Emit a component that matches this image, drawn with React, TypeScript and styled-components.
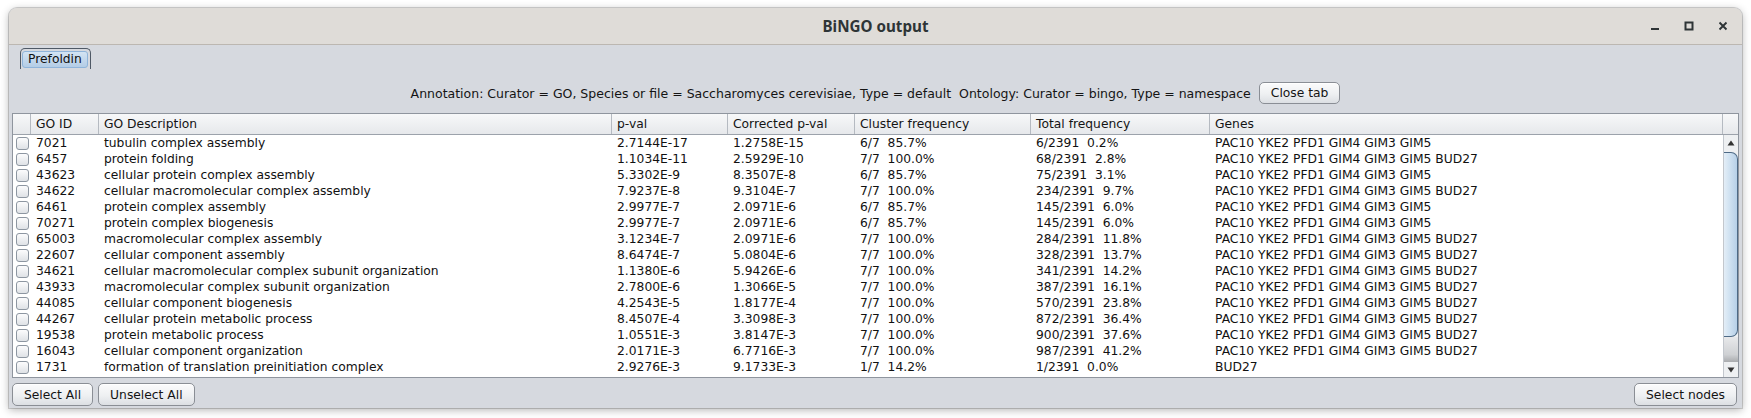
import React from 'react';
import styled, { createGlobalStyle } from 'styled-components';

const GlobalStyle = createGlobalStyle`
  html, body { margin: 0; padding: 0; background: #ffffff; }
  body {
    font-family: "DejaVu Sans", "Liberation Sans", sans-serif;
    font-size: 12.3px;
    color: #141414;
  }
  #root { width: 1751px; height: 418px; overflow: hidden; }
`;

const Page = styled.div`
  width: 1751px;
  height: 418px;
  box-sizing: border-box;
  padding: 8px 9px 10px 9px;
  display: flex;
`;

const Window = styled.div`
  flex: 1;
  display: flex;
  flex-direction: column;
  border-radius: 8px 8px 0 0;
  box-shadow: 0 0 0 1px rgba(0, 0, 0, 0.16), 0 2px 9px rgba(0, 0, 0, 0.3);
  overflow: hidden;
  background: #d6d9df;
`;

const TitleBar = styled.div`
  height: 36px;
  flex: none;
  display: grid;
  grid-template-columns: 1fr auto 1fr;
  align-items: center;
  background: #dfdcd8;
  border-bottom: 1px solid #bcb7b1;
`;

const Title = styled.div`
  grid-column: 2;
  font-family: "Noto Sans", "Open Sans", sans-serif;
  font-weight: 700;
  font-size: 15.2px;
  color: #2e3436;
`;

const Controls = styled.div`
  grid-column: 3;
  justify-self: end;
  display: flex;
  padding-right: 2px;
`;

const ControlButton = styled.div`
  width: 34px;
  height: 36px;
  display: flex;
  align-items: center;
  justify-content: center;
  color: #2e3436;
`;

const Body = styled.div`
  flex: 1;
  display: flex;
  flex-direction: column;
  padding: 0 3px 2px 3px;
  min-height: 0;
`;

const TabStrip = styled.div`
  display: flex;
  padding: 3px 0 0 8px;
  height: 21px;
`;

const Tab = styled.div`
  width: 71px;
  height: 21px;
  box-sizing: border-box;
  border: 1px solid #4f5966;
  border-bottom: none;
  border-radius: 5px 5px 0 0;
  padding: 2px 2px 1px 1px;
  background: #d6d9df;
`;

const TabInner = styled.div`
  height: 100%;
  box-sizing: border-box;
  border: 1px solid #8fb4da;
  border-radius: 3px;
  background: linear-gradient(#d3e3f3, #b4cde6);
  padding-left: 5px;
  line-height: 15px;
  color: #111;
  white-space: nowrap;
`;

const InfoRow = styled.div`
  margin-top: 13px;
  height: 22px;
  display: flex;
  align-items: center;
  justify-content: center;
  gap: 8px;
`;

const InfoText = styled.span`
  white-space: pre;
  font-size: 12.5px;
  color: #141414;
`;

const Button = styled.div<{ $h?: number }>`
  height: ${(p) => p.$h ?? 23}px;
  box-sizing: border-box;
  padding: 0 11px;
  display: flex;
  align-items: center;
  justify-content: center;
  border: 1px solid #8a8e95;
  border-radius: 5px;
  background: linear-gradient(#fbfbfc 0%, #eef0f2 55%, #dcdfe3 100%);
  box-shadow: inset 0 1px 0 #ffffff;
  color: #141414;
  white-space: nowrap;
`;

const TableFrame = styled.div`
  margin-top: 9px;
  height: 265px;
  box-sizing: border-box;
  border: 1px solid #8f959e;
  background: #ffffff;
  display: flex;
  flex-direction: column;
  overflow: hidden;
`;

const COLS = '18px 68px 513px 116px 127px 176px 179px 513px';

const HeaderRow = styled.div`
  display: grid;
  grid-template-columns: ${COLS} 15px;
  height: 21px;
  box-sizing: border-box;
  border-bottom: 1px solid #9ca2ab;
  background: linear-gradient(#f7f8f9, #e6e8eb);
  flex: none;
`;

const HeaderCell = styled.div<{ $last?: boolean }>`
  padding-left: 5px;
  line-height: 20px;
  border-right: ${(p) => (p.$last ? 'none' : '1px solid #b5bac1')};
  color: #141414;
  white-space: nowrap;
  overflow: hidden;
`;

const BodyArea = styled.div`
  flex: 1;
  display: flex;
  min-height: 0;
`;

const Viewport = styled.div`
  flex: 1;
  overflow: hidden;
`;

const Row = styled.div`
  display: grid;
  grid-template-columns: ${COLS};
  height: 16px;
  line-height: 16px;
`;

const Cell = styled.div`
  padding-left: 5px;
  white-space: pre;
  overflow: hidden;
  color: #111;
`;

const CheckCell = styled.div`
  display: flex;
  align-items: center;
  justify-content: center;
`;

const CheckBox = styled.div`
  width: 13px;
  height: 13px;
  box-sizing: border-box;
  border: 1px solid #8d96a1;
  border-radius: 3px;
  background: linear-gradient(#fcfcfd, #dfe2e6);
`;

const ScrollBar = styled.div`
  width: 15px;
  flex: none;
  display: flex;
  flex-direction: column;
  background: #eef0f2;
  border-left: 1px solid #c3c7cd;
  box-sizing: border-box;
`;

const ArrowButton = styled.div`
  height: 15px;
  flex: none;
  display: flex;
  align-items: center;
  justify-content: center;
  color: #333;
`;

const Track = styled.div`
  flex: 1;
  display: flex;
  flex-direction: column;
  min-height: 0;
`;

const Thumb = styled.div`
  margin-top: 2px;
  height: 185px;
  flex: none;
  box-sizing: border-box;
  border: 1px solid #4e6a86;
  border-left: none;
  border-radius: 0 7px 7px 0;
  background: linear-gradient(90deg, #e4eef7 0%, #cfe1f1 45%, #b7d0e8 100%);
`;

const TrackRest = styled.div`
  flex: 1;
  background: linear-gradient(#e8e9eb 0%, #cfd1d4 70%, #a9abae 100%);
`;

const ButtonRow = styled.div`
  margin-top: 5px;
  height: 23px;
  display: flex;
  gap: 5px;
`;

const Spacer = styled.div`
  flex: 1;
`;

const RightButton = styled(Button)`
  margin-right: 2px;
`;

type RowData = [string, string, string, string, string, string, string];

const G6 = 'PAC10 YKE2 PFD1 GIM4 GIM3 GIM5';
const G7 = 'PAC10 YKE2 PFD1 GIM4 GIM3 GIM5 BUD27';

const rows: RowData[] = [
  ['7021', 'tubulin complex assembly', '2.7144E-17', '1.2758E-15', '6/7  85.7%', '6/2391  0.2%', G6],
  ['6457', 'protein folding', '1.1034E-11', '2.5929E-10', '7/7  100.0%', '68/2391  2.8%', G7],
  ['43623', 'cellular protein complex assembly', '5.3302E-9', '8.3507E-8', '6/7  85.7%', '75/2391  3.1%', G6],
  ['34622', 'cellular macromolecular complex assembly', '7.9237E-8', '9.3104E-7', '7/7  100.0%', '234/2391  9.7%', G7],
  ['6461', 'protein complex assembly', '2.9977E-7', '2.0971E-6', '6/7  85.7%', '145/2391  6.0%', G6],
  ['70271', 'protein complex biogenesis', '2.9977E-7', '2.0971E-6', '6/7  85.7%', '145/2391  6.0%', G6],
  ['65003', 'macromolecular complex assembly', '3.1234E-7', '2.0971E-6', '7/7  100.0%', '284/2391  11.8%', G7],
  ['22607', 'cellular component assembly', '8.6474E-7', '5.0804E-6', '7/7  100.0%', '328/2391  13.7%', G7],
  ['34621', 'cellular macromolecular complex subunit organization', '1.1380E-6', '5.9426E-6', '7/7  100.0%', '341/2391  14.2%', G7],
  ['43933', 'macromolecular complex subunit organization', '2.7800E-6', '1.3066E-5', '7/7  100.0%', '387/2391  16.1%', G7],
  ['44085', 'cellular component biogenesis', '4.2543E-5', '1.8177E-4', '7/7  100.0%', '570/2391  23.8%', G7],
  ['44267', 'cellular protein metabolic process', '8.4507E-4', '3.3098E-3', '7/7  100.0%', '872/2391  36.4%', G7],
  ['19538', 'protein metabolic process', '1.0551E-3', '3.8147E-3', '7/7  100.0%', '900/2391  37.6%', G7],
  ['16043', 'cellular component organization', '2.0171E-3', '6.7716E-3', '7/7  100.0%', '987/2391  41.2%', G7],
  ['1731', 'formation of translation preinitiation complex', '2.9276E-3', '9.1733E-3', '1/7  14.2%', '1/2391  0.0%', 'BUD27'],
];

const headers = ['GO ID', 'GO Description', 'p-val', 'Corrected p-val', 'Cluster frequency', 'Total frequency', 'Genes'];

const MinimizeIcon = () => (
  <svg width="10" height="10" viewBox="0 0 10 10">
    <rect x="1" y="7" width="8" height="2" fill="currentColor" />
  </svg>
);

const MaximizeIcon = () => (
  <svg width="10" height="10" viewBox="0 0 10 10">
    <rect x="1.5" y="1.5" width="7" height="7" fill="none" stroke="currentColor" strokeWidth="2" />
  </svg>
);

const CloseIcon = () => (
  <svg width="10" height="10" viewBox="0 0 10 10">
    <path d="M1.5 1.5 L8.5 8.5 M8.5 1.5 L1.5 8.5" stroke="currentColor" strokeWidth="1.9" />
  </svg>
);

const UpArrow = () => (
  <svg width="8" height="6" viewBox="0 0 8 6">
    <path d="M4 0.5 L7.5 5.5 L0.5 5.5 Z" fill="currentColor" />
  </svg>
);

const DownArrow = () => (
  <svg width="8" height="6" viewBox="0 0 8 6">
    <path d="M0.5 0.5 L7.5 0.5 L4 5.5 Z" fill="currentColor" />
  </svg>
);

export default function App() {
  return (
    <>
      <GlobalStyle />
      <Page>
        <Window>
          <TitleBar>
            <Title>BiNGO output</Title>
            <Controls>
              <ControlButton>
                <MinimizeIcon />
              </ControlButton>
              <ControlButton>
                <MaximizeIcon />
              </ControlButton>
              <ControlButton>
                <CloseIcon />
              </ControlButton>
            </Controls>
          </TitleBar>
          <Body>
            <TabStrip>
              <Tab>
                <TabInner>Prefoldin</TabInner>
              </Tab>
            </TabStrip>
            <InfoRow>
              <InfoText>Annotation: Curator = GO, Species or file = Saccharomyces cerevisiae, Type = default</InfoText>
              <InfoText>Ontology: Curator = bingo, Type = namespace</InfoText>
              <Button $h={22}>Close tab</Button>
            </InfoRow>
            <TableFrame>
              <HeaderRow>
                <HeaderCell />
                {headers.map((h) => (
                  <HeaderCell key={h}>{h}</HeaderCell>
                ))}
                <HeaderCell $last />
              </HeaderRow>
              <BodyArea>
                <Viewport>
                  {rows.map((r) => (
                    <Row key={r[0]}>
                      <CheckCell>
                        <CheckBox />
                      </CheckCell>
                      {r.map((c, i) => (
                        <Cell key={i}>{c}</Cell>
                      ))}
                    </Row>
                  ))}
                  <Row>
                    <CheckCell>
                      <CheckBox />
                    </CheckCell>
                  </Row>
                </Viewport>
                <ScrollBar>
                  <ArrowButton>
                    <UpArrow />
                  </ArrowButton>
                  <Track>
                    <Thumb />
                    <TrackRest />
                  </Track>
                  <ArrowButton>
                    <DownArrow />
                  </ArrowButton>
                </ScrollBar>
              </BodyArea>
            </TableFrame>
            <ButtonRow>
              <Button>Select All</Button>
              <Button>Unselect All</Button>
              <Spacer />
              <RightButton>Select nodes</RightButton>
            </ButtonRow>
          </Body>
        </Window>
      </Page>
    </>
  );
}
